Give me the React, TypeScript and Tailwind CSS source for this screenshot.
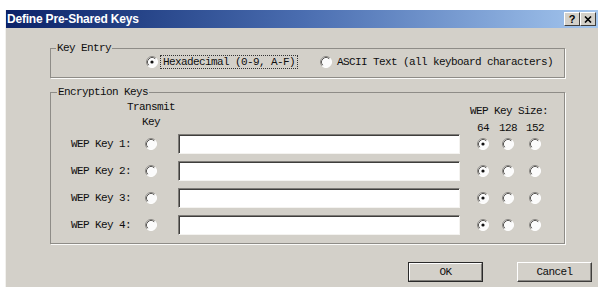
import React from "react";

const mono = "font-['Liberation_Mono',monospace] text-[11px] tracking-[-0.6px] text-[#0e0e0e]";

function Radio({ checked = false }: { checked?: boolean }) {
  return (
    <svg width="12" height="12" viewBox="0 0 12 12" className="shrink-0">
      <circle cx="6" cy="6" r="5.5" fill="#fbfbfb" />
      <path d="M2.11 9.89 A5.5 5.5 0 0 1 9.89 2.11" fill="none" stroke="#8a8884" />
      <path d="M2.82 9.18 A4.5 4.5 0 0 1 9.18 2.82" fill="none" stroke="#5a5855" />
      <path d="M9.89 2.11 A5.5 5.5 0 0 1 2.11 9.89" fill="none" stroke="#ffffff" />
      {checked && <circle cx="6" cy="6" r="1.6" fill="#111" />}
    </svg>
  );
}

function TextBox() {
  return (
    <div className="h-[20px] w-[282px] border border-t-[#7e7c78] border-l-[#7e7c78] border-b-[#f4f3f0] border-r-[#f4f3f0] bg-white shadow-[inset_1px_1px_0_#3f3e3c]" />
  );
}

function WinButton({ label, isDefault = false }: { label: string; isDefault?: boolean }) {
  return (
    <div
      className={`flex h-[20px] w-[75px] items-center justify-center border ${
        isDefault ? "border-[#2a2a2a]" : "border-t-white border-l-white border-b-[#3f3e3c] border-r-[#3f3e3c]"
      }`}
    >
      <div
        className={`flex h-full w-full items-center justify-center ${
          isDefault
            ? "border border-t-white border-l-white border-b-[#7e7c78] border-r-[#7e7c78]"
            : "shadow-[inset_-1px_-1px_0_#8a8884]"
        } ${mono}`}
      >
        {label}
      </div>
    </div>
  );
}

function KeyRow({ n }: { n: number }) {
  return (
    <div className="flex h-[20px] items-center pl-[20px]">
      <span className={`w-[74px] ${mono}`}>WEP Key {n}:</span>
      <Radio />
      <div className="ml-[21px]">
        <TextBox />
      </div>
      <div className="ml-[17px]">
        <Radio checked />
      </div>
      <div className="ml-[13px]">
        <Radio />
      </div>
      <div className="ml-[15px]">
        <Radio />
      </div>
    </div>
  );
}

export default function App() {
  return (
    <div className="flex h-[287px] w-[600px] overflow-hidden bg-white pl-[5px] pr-[2px] pt-[10px]">
      <div className="flex flex-1 flex-col border-l border-l-[#f2f1ee] bg-[#d3d0c9]">
        {/* title bar */}
        <div className="flex h-[18px] shrink-0 items-center justify-between bg-gradient-to-r from-[#0c2268] via-[#4a6db0] to-[#a4c6ee] pl-[1px] pr-[2px]">
          <span className="font-['Liberation_Sans',Arial,sans-serif] text-[12px] font-bold tracking-[-0.2px] text-white">
            Define Pre-Shared Keys
          </span>
          <div className="flex">
            <div className="flex h-[14px] w-[16px] items-center justify-center border border-t-white border-l-white border-b-[#3f3e3c] border-r-[#3f3e3c] bg-[#d3d0c9] font-['Liberation_Sans',Arial,sans-serif] text-[11px] font-bold leading-none text-black">
              ?
            </div>
            <div className="flex h-[14px] w-[16px] items-center justify-center border border-t-white border-l-white border-b-[#3f3e3c] border-r-[#3f3e3c] bg-[#d3d0c9]">
              <svg width="8" height="7" viewBox="0 0 8 7">
                <path d="M1 0.5 L7 6.5 M7 0.5 L1 6.5" stroke="#000" strokeWidth="1.6" />
              </svg>
            </div>
          </div>
        </div>

        {/* body */}
        <div className="flex flex-col pl-[44px]">
          <fieldset className="mt-[14px] w-[515px] border border-[#8e8c87] shadow-[1px_1px_0_#fbfbf9]">
            <legend className={`ml-[5px] px-[1px] leading-[12px] ${mono}`}>Key Entry</legend>
            <div className="flex h-[23px] items-start pl-[95px] pt-[1px]">
              <div className="flex h-[14px] items-center">
                <Radio checked />
                <span className={`ml-[2px] border border-dotted border-[#333] px-[2px] leading-[12px] ${mono}`}>
                  Hexadecimal (0-9, A-F)
                </span>
              </div>
              <div className="ml-[22px] flex h-[14px] items-center">
                <Radio />
                <span className={`ml-[5px] leading-[12px] ${mono}`}>ASCII Text (all keyboard characters)</span>
              </div>
            </div>
          </fieldset>

          <fieldset className="mt-[8px] w-[515px] border border-[#8e8c87] shadow-[1px_1px_0_#fbfbf9]">
            <legend className={`ml-[6px] px-[1px] leading-[12px] ${mono}`}>Encryption Keys</legend>
            <div className="flex h-[36px] pl-[20px]">
              <div className="w-[44px]" />
              <div className={`w-[72px] pt-[2px] text-center leading-[15px] ${mono}`}>
                Transmit
                <br />
                Key
              </div>
              <div className="w-[283px]" />
              <div className={`flex w-[78px] flex-col pt-[7px] leading-[13px] ${mono}`}>
                <span className="text-center">WEP Key Size:</span>
                <div className="mt-[4px] flex">
                  <span className="ml-[1px] w-[24px] text-center">64</span>
                  <span className="ml-[1px] w-[24px] text-center">128</span>
                  <span className="ml-[3px] w-[24px] text-center">152</span>
                </div>
              </div>
            </div>
            <div className="flex flex-col gap-[7px] pb-[8px]">
              {[1, 2, 3, 4].map((n) => (
                <KeyRow key={n} n={n} />
              ))}
            </div>
          </fieldset>
        </div>

        <div className="mt-[18px] flex justify-end gap-[34px] pr-[6px]">
          <WinButton label="OK" isDefault />
          <WinButton label="Cancel" />
        </div>
      </div>
    </div>
  );
}
